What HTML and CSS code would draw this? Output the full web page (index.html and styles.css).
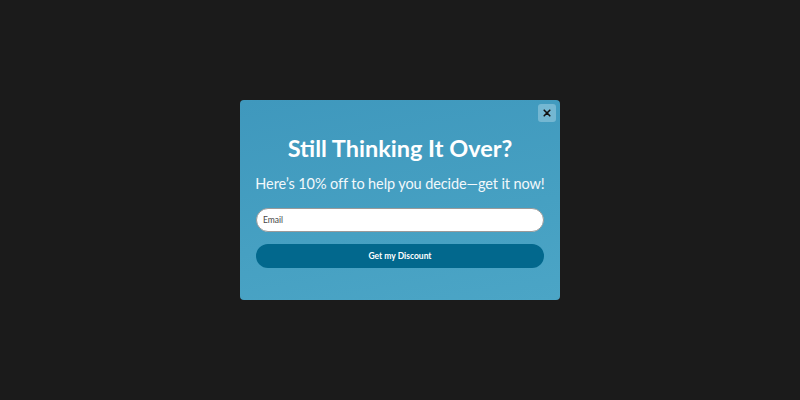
FILE: index.html
```html
<!DOCTYPE html>
<html lang="en">
<head>
  <meta charset="UTF-8">
  <meta name="viewport" content="width=device-width, initial-scale=1.0">
  <title>Discount Popup</title>
  <link rel="stylesheet" href="styles.css">
</head>
<body>

  <div class="popup">
    <div class="popup-top">
      <button class="close-btn" aria-label="Close">
        <svg width="8" height="8" viewBox="0 0 8 8"><path d="M1.2 1.2L6.8 6.8M6.8 1.2L1.2 6.8" stroke="#111" stroke-width="1.6" stroke-linecap="round"/></svg>
      </button>
    </div>
    <h2 class="title">Still Thinking It Over?</h2>
    <p class="subtitle">Here’s 10% off to help you decide—get it now!</p>
    <form class="signup">
      <input class="email" type="email" placeholder="Email">
      <button class="discount-btn" type="button">Get my Discount</button>
    </form>
  </div>

</body>
</html>
```

FILE: styles.css
```css
body {
  margin: 0;
  height: 100vh;
  background: #1b1b1b;
  font-family: 'Lato', sans-serif;
  display: flex;
  justify-content: center;
  align-items: center;
}

.popup {
  width: 320px;
  height: 200px;
  box-sizing: border-box;
  padding: 4px 16px 0;
  border-radius: 4px;
  background: linear-gradient(170deg, #3f98bd 0%, #46a0c2 60%, #4ba5c6 100%);
}

.popup-top {
  display: flex;
  justify-content: flex-end;
  margin-right: -12px;
}

.close-btn {
  width: 18px;
  height: 18px;
  padding: 0;
  border: none;
  border-radius: 3px;
  background: #74b7d2;
  display: flex;
  align-items: center;
  justify-content: center;
  cursor: pointer;
}

.title {
  margin: 8px 0 0;
  text-align: center;
  color: #fff;
  font-size: 23.5px;
  font-weight: bold;
  line-height: 36px;
}

.subtitle {
  margin: 7px -4px 0;
  text-align: center;
  white-space: nowrap;
  color: #f2f8fb;
  font-size: 14.5px;
  letter-spacing: -0.1px;
  line-height: 22px;
}

.signup {
  margin-top: 13px;
  display: flex;
  flex-direction: column;
  gap: 12px;
}

.email {
  height: 24px;
  box-sizing: border-box;
  padding: 0 6px;
  border: 1px solid #9a9a9a;
  border-radius: 12px;
  background: #fff;
  font-family: 'Lato', sans-serif;
  font-size: 8.5px;
  outline: none;
}

.email::placeholder {
  color: #444;
}

.discount-btn {
  height: 24px;
  border: none;
  border-radius: 12px;
  background: #02688d;
  color: #fff;
  font-family: 'Lato', sans-serif;
  font-size: 8.5px;
  font-weight: bold;
  cursor: pointer;
}
```
